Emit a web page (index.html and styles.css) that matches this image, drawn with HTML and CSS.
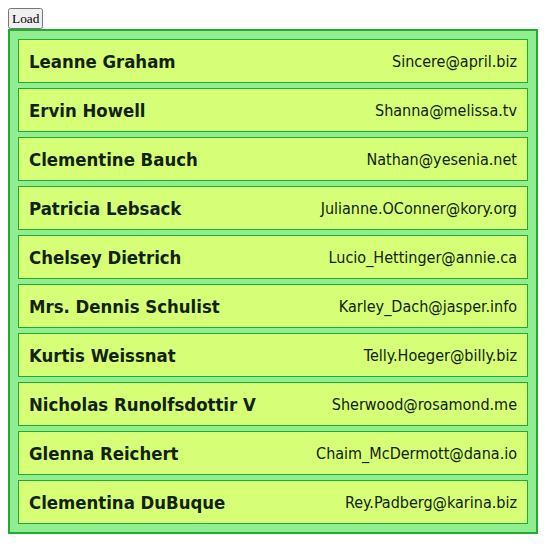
FILE: index.html
```html
<!DOCTYPE html>
<html>
<head>
<meta charset="utf-8">
<link rel="stylesheet" href="styles.css">
</head>
<body>
<button class="load">Load</button>
<div class="list">
  <div class="item"><span class="name">Leanne Graham</span><span class="email">Sincere@april.biz</span></div>
  <div class="item"><span class="name">Ervin Howell</span><span class="email">Shanna@melissa.tv</span></div>
  <div class="item"><span class="name">Clementine Bauch</span><span class="email">Nathan@yesenia.net</span></div>
  <div class="item"><span class="name">Patricia Lebsack</span><span class="email">Julianne.OConner@kory.org</span></div>
  <div class="item"><span class="name">Chelsey Dietrich</span><span class="email">Lucio_Hettinger@annie.ca</span></div>
  <div class="item"><span class="name">Mrs. Dennis Schulist</span><span class="email">Karley_Dach@jasper.info</span></div>
  <div class="item"><span class="name">Kurtis Weissnat</span><span class="email">Telly.Hoeger@billy.biz</span></div>
  <div class="item"><span class="name">Nicholas Runolfsdottir V</span><span class="email">Sherwood@rosamond.me</span></div>
  <div class="item"><span class="name">Glenna Reichert</span><span class="email">Chaim_McDermott@dana.io</span></div>
  <div class="item"><span class="name">Clementina DuBuque</span><span class="email">Rey.Padberg@karina.biz</span></div>
</div>
</body>
</html>
```
FILE: styles.css
```css
body {
  margin: 8px;
  font-family: "DejaVu Sans Condensed", "DejaVu Sans", sans-serif;
}
.load {
  font-family: "Liberation Serif", serif;
  font-size: 13.33px;
  height: 21px;
  padding: 1px 2px;
  display: block;
}
.list {
  box-sizing: border-box;
  width: 530px;
  background: #90ee90;
  border: 2px solid #22aa33;
  padding: 8px;
  display: flex;
  flex-direction: column;
  gap: 5px;
}
.item {
  box-sizing: border-box;
  height: 44px;
  background: #d6ff77;
  border: 1px solid #22aa33;
  display: flex;
  align-items: center;
  justify-content: space-between;
  padding: 0 10px;
  color: #112211;
}
.name {
  font-weight: bold;
  font-size: 18.4px;
}
.email {
  font-size: 16px;
}
```
